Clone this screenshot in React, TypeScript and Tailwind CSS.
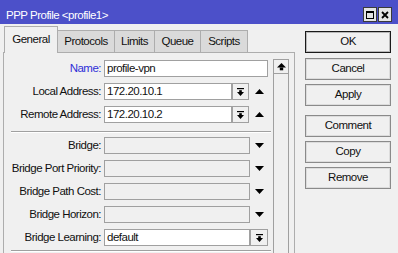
import React from "react";

const UpTri = () => (
  <svg width="9" height="5" viewBox="0 0 9 5" className="block">
    <polygon points="4.5,0 9,5 0,5" fill="#000" />
  </svg>
);
const DownTri = () => (
  <svg width="9" height="5" viewBox="0 0 9 5" className="block">
    <polygon points="0,0 9,0 4.5,5" fill="#000" />
  </svg>
);
const DropIcon = () => (
  <svg width="7" height="8" viewBox="0 0 7 8" className="block">
    <rect x="0" y="0" width="7" height="1.2" fill="#000" />
    <rect x="2.2" y="2.2" width="2.6" height="1.8" fill="#000" />
    <polygon points="0,4 7,4 3.5,8" fill="#000" />
  </svg>
);
const ScrollUpIcon = () => (
  <svg width="9" height="8" viewBox="0 0 9 8" className="block">
    <polygon points="4.5,0 9,4.5 0,4.5" fill="#000" />
    <rect x="2.8" y="4.5" width="3.4" height="2.8" fill="#000" />
  </svg>
);

function DropBtn({ w }: { w: string }) {
  return (
    <div className={`${w} h-[17px] border border-[#a0a0a0] bg-[#f0f0f0] flex items-center justify-center`}>
      <DropIcon />
    </div>
  );
}

function Label({ text, blue }: { text: string; blue?: boolean }) {
  return (
    <div className={`w-[97px] text-right whitespace-nowrap ${blue ? "text-[#2f2fd8]" : "text-[#111]"}`}>{text}</div>
  );
}

function Field({ value, w, disabled }: { value?: string; w: string; disabled?: boolean }) {
  return (
    <div
      className={`${w} h-[17px] border border-[#a0a0a0] flex items-center pl-[2px] ${
        disabled ? "bg-[#f0f0f0]" : "bg-white"
      }`}
    >
      {value}
    </div>
  );
}

function Sep() {
  return <div className="ml-[7px] w-[260px] border-t border-[#a0a0a0] border-b border-b-white" />;
}

function Btn({ children, def, cls }: { children: React.ReactNode; def?: boolean; cls?: string }) {
  return (
    <div
      className={`h-[22px] w-[86px] flex items-center justify-center bg-[#f0f0f0] border ${
        def ? "border-[#1a1a1a] shadow-[inset_0_0_0_1px_#b8b8b8]" : "border-[#8a8a8a] shadow-[inset_0_0_0_1px_#dcdcdc]"
      } ${cls ?? ""}`}
    >
      {children}
    </div>
  );
}

export default function App() {
  return (
    <div className="w-[398px] h-[253px] overflow-hidden bg-[#f0f0f0] text-[11.5px] tracking-[-0.5px] leading-none text-[#111] font-['Liberation_Sans',Arial,sans-serif]">
      {/* title bar */}
      <div className="h-[24px] bg-[#4c50c9] flex items-start pl-[6px] pr-[6px] text-white">
        <span className="flex-1 mt-[10px] whitespace-nowrap">PPP Profile &lt;profile1&gt;</span>
        <div className="flex gap-[1px] mt-[7px]">
          <div className="w-[14px] h-[15px] bg-[#e4e4e4] border border-[#3a3a3a] flex items-center justify-center">
            <div className="w-[8px] h-[8px] border border-black border-t-2" />
          </div>
          <div className="w-[14px] h-[15px] bg-[#e4e4e4] border border-[#3a3a3a] flex items-center justify-center">
            <svg width="8" height="8" viewBox="0 0 8 8">
              <path d="M1 1 L7 7 M7 1 L1 7" stroke="#000" strokeWidth="1.8" />
            </svg>
          </div>
        </div>
      </div>

      <div className="flex">
        {/* left: tabs + panel */}
        <div className="ml-[3px] w-[292px] flex flex-col">
          <div className="h-[28px] flex items-end pl-[1px]">
            <div className="relative z-10 -mb-px w-[54px] h-[27px] bg-[#f0f0f0] border border-b-0 border-[#adadad] flex items-center justify-center">
              General
            </div>
            <div className="-ml-px w-[58px] h-[22px] bg-[#dadada] border border-b-0 border-[#adadad] flex items-center justify-center pt-[1px]">
              Protocols
            </div>
            <div className="-ml-px w-[41px] h-[22px] bg-[#dadada] border border-b-0 border-[#adadad] flex items-center justify-center pt-[1px]">
              Limits
            </div>
            <div className="-ml-px w-[47px] h-[22px] bg-[#dadada] border border-b-0 border-[#adadad] flex items-center justify-center pt-[1px]">
              Queue
            </div>
            <div className="-ml-px w-[48px] h-[22px] bg-[#dadada] border border-b-0 border-[#adadad] flex items-center justify-center pt-[1px]">
              Scripts
            </div>
          </div>

          <div className="h-[240px] border border-[#adadad] bg-[#f0f0f0] flex items-start">
            {/* form */}
            <div className="w-[269px] pt-[7px] flex flex-col">
              <div className="flex items-center h-[17px]">
                <Label text="Name:" blue />
                <div className="ml-[3px]">
                  <Field value="profile-vpn" w="w-[164px]" />
                </div>
              </div>
              <div className="flex items-center h-[17px] mt-[6px]">
                <Label text="Local Address:" />
                <div className="ml-[3px]">
                  <Field value="172.20.10.1" w="w-[128px]" />
                </div>
                <DropBtn w="w-[17px]" />
                <div className="ml-[6px]">
                  <UpTri />
                </div>
              </div>
              <div className="flex items-center h-[17px] mt-[6px]">
                <Label text="Remote Address:" />
                <div className="ml-[3px]">
                  <Field value="172.20.10.2" w="w-[128px]" />
                </div>
                <DropBtn w="w-[17px]" />
                <div className="ml-[6px]">
                  <UpTri />
                </div>
              </div>

              <div className="mt-[8px]">
                <Sep />
              </div>

              {["Bridge:", "Bridge Port Priority:", "Bridge Path Cost:", "Bridge Horizon:"].map((l, i) => (
                <div key={l} className={`flex items-center h-[17px] ${i === 0 ? "mt-[4px]" : "mt-[6px]"}`}>
                  <Label text={l} />
                  <div className="ml-[3px]">
                    <Field w="w-[146px]" disabled />
                  </div>
                  <div className="ml-[5px]">
                    <DownTri />
                  </div>
                </div>
              ))}
              <div className="flex items-center h-[17px] mt-[6px]">
                <Label text="Bridge Learning:" />
                <div className="ml-[3px]">
                  <Field value="default" w="w-[146px]" />
                </div>
                <DropBtn w="w-[18px]" />
              </div>
              <div className="mt-[4px]">
                <Sep />
              </div>
            </div>

            {/* scrollbar */}
            <div className="w-[16px] mt-[6px] flex flex-col">
              <div className="h-[15px] border border-[#a0a0a0] bg-[#f0f0f0] flex items-center justify-center">
                <ScrollUpIcon />
              </div>
              <div className="h-[200px] border-x border-[#a0a0a0] bg-[#f0f0f0]" />
            </div>
          </div>
        </div>

        {/* right buttons */}
        <div className="ml-[10px] mt-[7px] flex flex-col">
          <Btn def>OK</Btn>
          <Btn cls="mt-[5px]">Cancel</Btn>
          <Btn cls="mt-[4px]">Apply</Btn>
          <Btn cls="mt-[9px]">Comment</Btn>
          <Btn cls="mt-[4px]">Copy</Btn>
          <Btn cls="mt-[4px]">Remove</Btn>
        </div>
      </div>
    </div>
  );
}
